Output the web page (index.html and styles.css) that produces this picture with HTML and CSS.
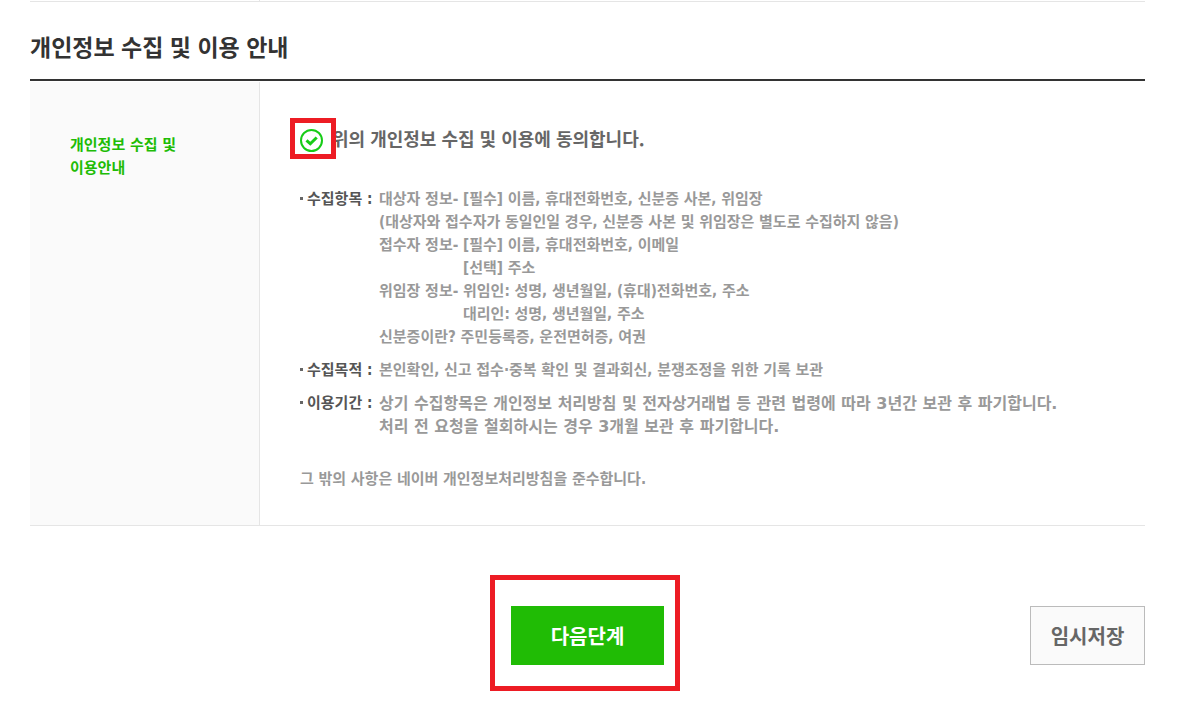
FILE: index.html
```html
<!DOCTYPE html>
<html lang="ko">
    <head>
        <meta charset="UTF-8">
        <meta name="viewport" content="width=device-width, initial-scale=1.0">
        <title>개인정보 수집 및 이용 안내</title>

        <!-- CSS -->
        <link rel="stylesheet" href="styles.css">
    </head>
    <body>
        <div class="prev-section"></div>

        <main>
            <h1 class="title">개인정보 수집 및 이용 안내</h1>

            <section class="privacy">
                <h2 class="privacy-name">개인정보 수집 및<br>이용안내</h2>

                <div class="privacy-content">
                    <div class="agree">
                        <span class="mark agree-mark">
                            <input type="checkbox" id="agree" class="agree-input" checked>
                            <svg class="agree-icon" viewBox="0 0 24 24" aria-hidden="true">
                                <circle cx="11.5" cy="11.5" r="10.5"/>
                                <path d="M6.5 11.4l3.8 3.4 6.4-6.3"/>
                            </svg>
                        </span>
                        <label for="agree" class="agree-label">위의 개인정보 수집 및 이용에 동의합니다.</label>
                    </div>

                    <dl class="terms">
                        <dt>수집항목 :</dt>
                        <dd>
                            <p class="pair"><span>대상자 정보-</span><span>[필수] 이름, 휴대전화번호, 신분증 사본, 위임장</span></p>
                            <p>(대상자와 접수자가 동일인일 경우, 신분증 사본 및 위임장은 별도로 수집하지 않음)</p>
                            <p class="pair"><span>접수자 정보-</span><span>[필수] 이름, 휴대전화번호, 이메일<br>[선택] 주소</span></p>
                            <p class="pair"><span>위임장 정보-</span><span>위임인: 성명, 생년월일, (휴대)전화번호, 주소<br>대리인: 성명, 생년월일, 주소</span></p>
                            <p>신분증이란? 주민등록증, 운전면허증, 여권</p>
                        </dd>
                        <dt>수집목적 :</dt>
                        <dd>본인확인, 신고 접수·중복 확인 및 결과회신, 분쟁조정을 위한 기록 보관</dd>
                        <dt>이용기간 :</dt>
                        <dd class="period">상기 수집항목은 개인정보 처리방침 및 전자상거래법 등 관련 법령에 따라 3년간 보관 후 파기합니다.<br>처리 전 요청을 철회하시는 경우 3개월 보관 후 파기합니다.</dd>
                    </dl>

                    <p class="note">그 밖의 사항은 네이버 개인정보처리방침을 준수합니다.</p>
                </div>
            </section>

            <div class="buttons">
                <div class="mark next-mark">
                    <button type="submit" class="btn btn-next">다음단계</button>
                </div>
                <button type="button" class="btn btn-save">임시저장</button>
            </div>
        </main>
    </body>
</html>
```

FILE: styles.css
```css
*{
    margin: 0;
    padding: 0;
    box-sizing: border-box;
}

body{
    padding: 0 56px 0 30px;
    background: #fff;
    color: #999;
    font-family: "DejaVu Sans Condensed", "Noto Sans CJK KR", sans-serif;
    font-size: 15px;
    font-weight: bold;
    line-height: 23px;
    word-break: keep-all;
}

/* End of the section above */
.prev-section{
    height: 2px;
    border-bottom: 1px solid #e5e5e5;
    background: linear-gradient(#e5e5e5, #e5e5e5) 229px 0 / 1px 1px no-repeat;
}

.title{
    padding: 28px 0 17px;
    border-bottom: 2px solid #333;
    color: #333;
    font-family: "Noto Sans CJK KR", sans-serif;
    font-size: 23px;
    line-height: 32px;
}

.privacy{
    display: grid;
    grid-template-columns: 230px 1fr;
    margin-top: 1px;
    border-bottom: 1px solid #e5e5e5;
}

.privacy-name{
    padding: 52px 20px 0 40px;
    border-right: 1px solid #e5e5e5;
    background: #fafafa;
    color: #20bc05;
    font-size: 15px;
}

.privacy-content{
    padding: 36px 30px 34px;
}

/* Red frames */
.mark{
    border: 5px solid #ed1c24;
}

.agree{
    display: flex;
    align-items: center;
}

.agree-mark{
    position: relative;
    z-index: 1;
    width: 46px;
    height: 41px;
    padding: 6px 5px;
}

.agree-input{
    position: absolute;
    inset: 0;
    width: 100%;
    height: 100%;
    opacity: 0;
    cursor: pointer;
}

.agree-icon{
    display: block;
    width: 24px;
    height: 24px;
    fill: none;
    stroke: #17cc17;
    stroke-width: 2;
}

.agree-icon path{
    stroke-width: 3;
}

.agree-label{
    margin-left: -4px;
    color: #666;
    font-family: "Noto Sans CJK KR", sans-serif;
    font-size: 18px;
    cursor: pointer;
}

.terms{
    display: grid;
    grid-template-columns: 79px 1fr;
    row-gap: 10px;
    margin: 29px 0 0 10px;
}

.terms dt{
    display: flex;
    gap: 4px;
    color: #555;
}

.terms dt::before{
    content: "";
    width: 3px;
    height: 3px;
    margin-top: 9px;
    background: #666;
}

.pair{
    display: grid;
    grid-template-columns: 84px 1fr;
}

.period{
    font-family: "DejaVu Sans", "Noto Sans CJK KR", sans-serif;
    font-size: 16px;
}

.note{
    margin: 30px 0 0 10px;
}

.buttons{
    display: grid;
    grid-template-columns: 1fr auto 1fr;
    align-items: end;
    margin-top: 49px;
}

.next-mark{
    grid-column: 2;
    margin-right: 5px;
    padding: 26px 11px 21px 16px;
}

.btn{
    display: block;
    height: 59px;
    font-family: "Noto Sans CJK KR", sans-serif;
    font-size: 20px;
    font-weight: bold;
    cursor: pointer;
}

.btn-next{
    width: 153px;
    border: 0;
    background: #20bc05;
    color: #fff;
}

.btn-save{
    justify-self: end;
    width: 115px;
    margin-bottom: 26px;
    border: 1px solid #bbb;
    background: #fafafa;
    color: #666;
}
```
